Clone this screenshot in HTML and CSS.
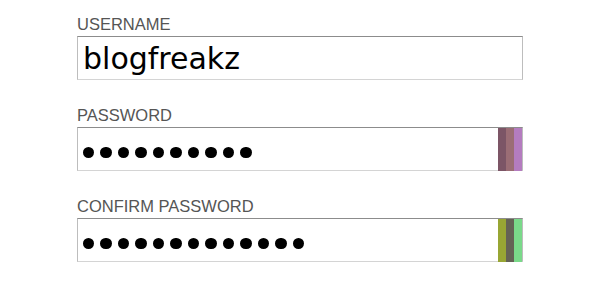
FILE: index.html
```html
<!DOCTYPE html>
<html>
<head>
<meta charset="utf-8">
<link rel="stylesheet" href="styles.css">
</head>
<body>
<form class="form">
  <div class="field">
    <label class="label">USERNAME</label>
    <div class="box">
      <span class="value">blogfreakz</span>
    </div>
  </div>
  <div class="field">
    <label class="label">PASSWORD</label>
    <div class="box">
      <div class="dots">
        <i class="dot"></i><i class="dot"></i><i class="dot"></i><i class="dot"></i><i class="dot"></i>
        <i class="dot"></i><i class="dot"></i><i class="dot"></i><i class="dot"></i><i class="dot"></i>
      </div>
      <div class="swatches">
        <span class="sw sw-p1"></span><span class="sw sw-p2"></span><span class="sw sw-p3"></span>
      </div>
    </div>
  </div>
  <div class="field">
    <label class="label">CONFIRM PASSWORD</label>
    <div class="box">
      <div class="dots">
        <i class="dot"></i><i class="dot"></i><i class="dot"></i><i class="dot"></i><i class="dot"></i>
        <i class="dot"></i><i class="dot"></i><i class="dot"></i><i class="dot"></i><i class="dot"></i>
        <i class="dot"></i><i class="dot"></i><i class="dot"></i>
      </div>
      <div class="swatches">
        <span class="sw sw-c1"></span><span class="sw sw-c2"></span><span class="sw sw-c3"></span>
      </div>
    </div>
  </div>
</form>
</body>
</html>
```
FILE: styles.css
```css
html, body {
  margin: 0;
  padding: 0;
  background: #fff;
}
.form {
  display: flex;
  flex-direction: column;
  gap: 26px;
  padding: 15px 0 0 77px;
  width: 446px;
}
.field {
  display: flex;
  flex-direction: column;
}
.label {
  font-family: "Liberation Sans", Arial, sans-serif;
  font-size: 16.5px;
  line-height: 18px;
  height: 18px;
  color: #555;
  margin-bottom: 3px;
}
.box {
  box-sizing: border-box;
  height: 44px;
  width: 446px;
  display: flex;
  border-top: 1px solid #8c8c8c;
  border-left: 1px solid #bdbdbd;
  border-right: 1px solid #bdbdbd;
  border-bottom: 1px solid #d4d4d4;
  background: #fff;
}
.value {
  font-family: "DejaVu Sans", Verdana, sans-serif;
  font-size: 30px;
  line-height: 44px;
  padding-left: 5px;
  color: #000;
}
.dots {
  flex: 1;
  display: flex;
  gap: 6.3px;
  padding: 18.5px 0 0 5px;
}
.dot {
  width: 11.2px;
  height: 11.2px;
  border-radius: 50%;
  background: #000;
}
.swatches {
  display: flex;
  margin-bottom: -1px;
}
.sw {
  width: 8px;
}
.sw-p1 { background: #7c5566; }
.sw-p2 { background: #9b6d75; }
.sw-p3 { background: #b47cbf; }
.sw-c1 { background: #98a634; }
.sw-c2 { background: #646255; }
.sw-c3 { background: #7ad98a; }
```
